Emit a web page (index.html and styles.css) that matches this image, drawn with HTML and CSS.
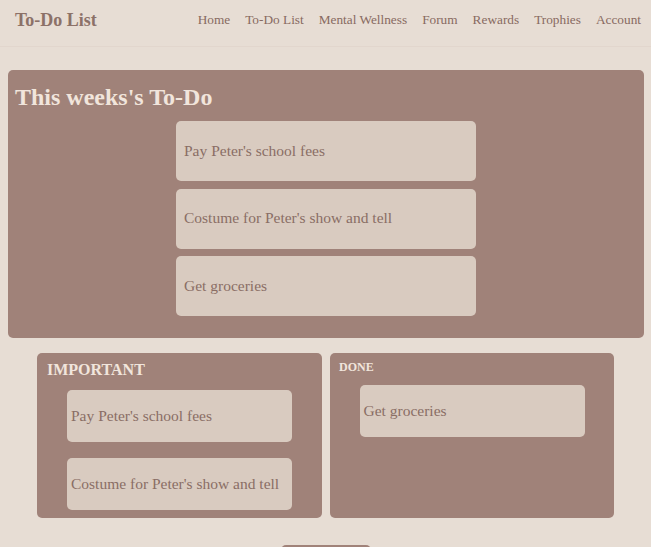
FILE: index.html
```html
<!DOCTYPE html>
<html>
<head>
<meta charset="utf-8">
<link rel="stylesheet" href="styles.css">
</head>
<body>
<header class="nav">
  <div class="brand">To-Do List</div>
  <nav class="links">
    <a>Home</a>
    <a>To-Do List</a>
    <a>Mental Wellness</a>
    <a>Forum</a>
    <a>Rewards</a>
    <a>Trophies</a>
    <a>Account</a>
  </nav>
</header>
<main class="main">
  <section class="week">
    <h2 class="week-title">This weeks's To-Do</h2>
    <div class="week-list">
      <div class="card card-big">Pay Peter's school fees</div>
      <div class="card card-big">Costume for Peter's show and tell</div>
      <div class="card card-big">Get groceries</div>
    </div>
  </section>
  <div class="row">
    <section class="box box-important">
      <h3 class="imp-title">IMPORTANT</h3>
      <div class="imp-list">
        <div class="card card-small">Pay Peter's school fees</div>
        <div class="card card-small">Costume for Peter's show and tell</div>
      </div>
    </section>
    <section class="box box-done">
      <h4 class="done-title">DONE</h4>
      <div class="done-list">
        <div class="card card-small">Get groceries</div>
      </div>
    </section>
  </div>
  <div class="btn-wrap"><button class="btn">Add</button></div>
</main>
</body>
</html>
```

FILE: styles.css
```css
* { box-sizing: border-box; }
html, body {
  margin: 0;
  padding: 0;
  background: #e7ddd4;
  font-family: "Liberation Serif", "Times New Roman", serif;
  color: #8c7168;
}
.nav {
  height: 47px;
  display: flex;
  align-items: center;
  justify-content: space-between;
  padding: 0 10px 6px 15px;
  border-bottom: 1px solid #e2d6cd;
}
.brand {
  font-size: 18px;
  font-weight: bold;
  color: #8c7168;
}
.links {
  display: flex;
  gap: 15px;
  font-size: 13.3px;
}
.links a { color: #876a61; }
.main {
  padding: 23px 7px 0 8px;
}
.week {
  background: #a08279;
  border-radius: 5px;
  padding: 12px 7px 22px 7px;
}
.week-title {
  margin: 0;
  font-size: 24px;
  line-height: 30px;
  color: #f1e5dc;
  font-weight: bold;
}
.week-list {
  display: flex;
  flex-direction: column;
  align-items: center;
  gap: 7.5px;
  margin-top: 9px;
}
.card {
  background: #d9cbc0;
  border-radius: 5px;
  display: flex;
  align-items: center;
  color: #8a6e65;
}
.card-big {
  width: 300px;
  height: 60px;
  padding: 0 0 1px 8px;
  font-size: 15.5px;
}
.row {
  display: flex;
  justify-content: center;
  gap: 8px;
  margin: 15px 1px 0 0;
}
.box {
  background: #a08279;
  border-radius: 5px;
  width: 285px;
  height: 165px;
}
.box-important { padding: 7px 10px 8px 10px; }
.box-done { padding: 6px 9px 8px 9px; width: 284px; }
.imp-title {
  margin: 0;
  font-size: 16px;
  line-height: 20px;
  color: #f1e5dc;
  font-weight: bold;
}
.imp-list {
  display: flex;
  flex-direction: column;
  align-items: center;
  gap: 16px;
  margin-top: 10px;
}
.done-title {
  margin: 0;
  font-size: 12px;
  line-height: 16px;
  color: #f1e5dc;
  font-weight: bold;
}
.done-list {
  display: flex;
  flex-direction: column;
  align-items: center;
  margin-top: 10px;
}
.card-small {
  width: 225px;
  height: 52px;
  padding-left: 4px;
  font-size: 15.5px;
}
.btn-wrap {
  display: flex;
  justify-content: center;
  margin-top: 27px;
}
.btn {
  width: 90px;
  height: 40px;
  border: none;
  border-radius: 5px;
  background: #a08279;
  color: #f1e5dc;
  font-family: inherit;
  font-size: 14px;
  padding-top: 16px;
}
```
